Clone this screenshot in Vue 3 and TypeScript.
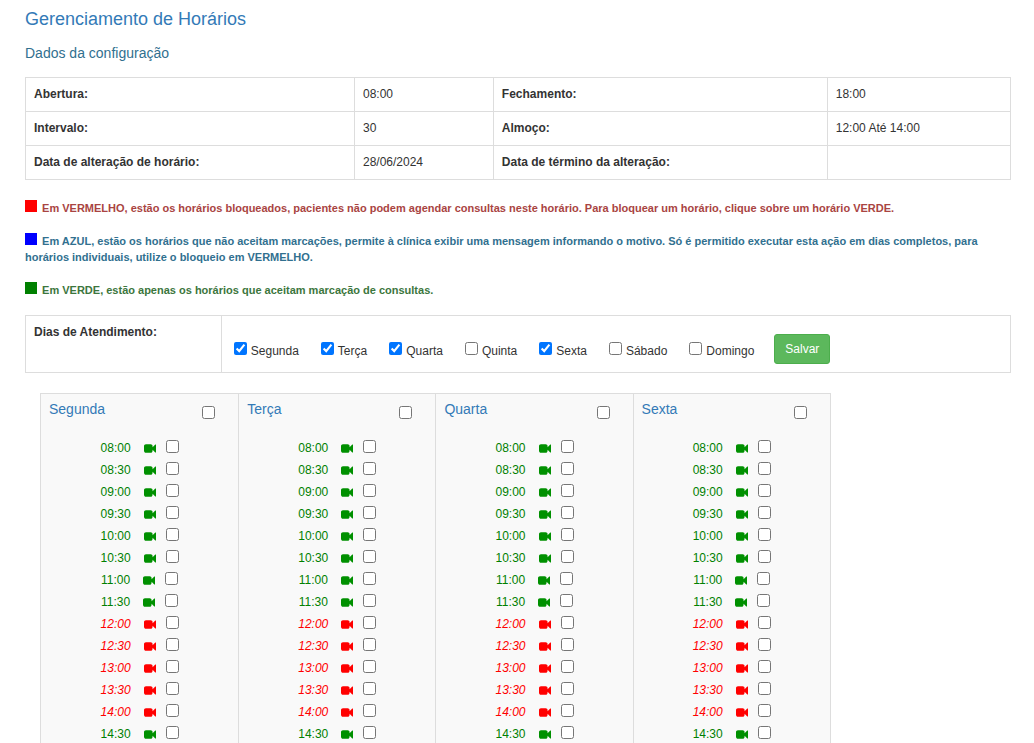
<script setup lang="ts">
import { reactive } from 'vue'

interface Weekday {
  name: string
  open: boolean
}

interface Slot {
  time: string
  blocked: boolean
}

const weekdays = reactive<Weekday[]>([
  { name: 'Segunda', open: true },
  { name: 'Terça', open: true },
  { name: 'Quarta', open: true },
  { name: 'Quinta', open: false },
  { name: 'Sexta', open: true },
  { name: 'Sábado', open: false },
  { name: 'Domingo', open: false },
])

const columns: string[] = ['Segunda', 'Terça', 'Quarta', 'Sexta']

const times: string[] = [
  '08:00', '08:30', '09:00', '09:30', '10:00', '10:30', '11:00',
  '11:30', '12:00', '12:30', '13:00', '13:30', '14:00', '14:30',
]
const slots: Slot[] = times.map((time) => ({
  time,
  blocked: time >= '12:00' && time <= '14:00',
}))
</script>

<template>
  <main class="page">
    <h1 class="title">Gerenciamento de Horários</h1>
    <h2 class="subtitle">Dados da configuração</h2>

    <table class="config">
      <colgroup>
        <col class="c1" /><col class="c2" /><col class="c3" /><col class="c4" />
      </colgroup>
      <tbody>
        <tr>
          <th scope="row">Abertura:</th>
          <td>08:00</td>
          <th scope="row">Fechamento:</th>
          <td>18:00</td>
        </tr>
        <tr>
          <th scope="row">Intervalo:</th>
          <td>30</td>
          <th scope="row">Almoço:</th>
          <td>12:00 Até 14:00</td>
        </tr>
        <tr>
          <th scope="row">Data de alteração de horário:</th>
          <td>28/06/2024</td>
          <th scope="row">Data de término da alteração:</th>
          <td></td>
        </tr>
      </tbody>
    </table>

    <section class="legend">
      <p class="note danger">
        <span class="swatch red"></span>
        Em VERMELHO, estão os horários bloqueados, pacientes não podem agendar consultas neste horário. Para bloquear um horário, clique sobre um horário VERDE.
      </p>
      <p class="note info">
        <span class="swatch blue"></span>
        Em AZUL, estão os horários que não aceitam marcações, permite à clínica exibir uma mensagem informando o motivo. Só é permitido executar esta ação em dias completos, para horários individuais, utilize o bloqueio em VERMELHO.
      </p>
      <p class="note success">
        <span class="swatch green"></span>
        Em VERDE, estão apenas os horários que aceitam marcação de consultas.
      </p>
    </section>

    <form class="days" @submit.prevent>
      <div class="days-label">Dias de Atendimento:</div>
      <div class="days-options">
        <label v-for="day in weekdays" :key="day.name" class="day">
          <input v-model="day.open" type="checkbox" />
          <span>{{ day.name }}</span>
        </label>
        <button class="save" type="submit">Salvar</button>
      </div>
    </form>

    <section class="schedule">
      <div v-for="column in columns" :key="column" class="column">
        <label class="column-head">
          <span>{{ column }}</span>
          <input type="checkbox" />
        </label>
        <label
          v-for="slot in slots"
          :key="slot.time"
          class="slot"
          :class="{ blocked: slot.blocked }"
        >
          <span class="time">{{ slot.time }}</span>
          <svg class="camera" viewBox="0 256 1792 1280" aria-hidden="true">
            <path
              d="M1792 352v1088q0 42-39 59-13 5-25 5-27 0-45-19l-403-403v166q0 119-84.5 203.5t-203.5 84.5h-704q-119 0-203.5-84.5t-84.5-203.5v-704q0-119 84.5-203.5t203.5-84.5h704q119 0 203.5 84.5t84.5 203.5v165l403-402q18-19 45-19 12 0 25 5 39 17 39 59z"
            />
          </svg>
          <input type="checkbox" />
        </label>
      </div>
    </section>
  </main>
</template>

<style>
body {
  margin: 0;
  background: #fff;
}
</style>

<style scoped>
.page {
  box-sizing: border-box;
  height: 100vh;
  overflow: hidden;
  padding: 9px 23px 0 25px;
  font-family: "Liberation Sans", Arial, sans-serif;
  font-size: 12px;
  line-height: 17px;
  color: #333;
}

input[type='checkbox'] {
  width: 13px;
  height: 13px;
  margin: 0;
  flex: none;
}

.title {
  margin: 0;
  font-size: 18px;
  line-height: 20px;
  font-weight: 400;
  color: #337ab7;
}

.subtitle {
  margin: 16px 0;
  font-size: 14px;
  line-height: 16px;
  font-weight: 400;
  color: #31708f;
}

.config {
  width: 100%;
  table-layout: fixed;
  border-collapse: collapse;
}

.c1 { width: 33.4%; }
.c2 { width: 14.1%; }
.c3 { width: 33.9%; }

.config th,
.config td {
  height: 17px;
  padding: 8px;
  border: 1px solid #ddd;
  text-align: left;
  vertical-align: top;
}

.legend {
  margin-top: 20px;
  font-size: 11px;
  line-height: 16px;
  font-weight: 700;
}

.note {
  margin: 0 0 17px;
}

.danger { color: #a94442; }
.info { color: #31708f; }
.success { color: #3c763d; }

.swatch {
  display: inline-block;
  width: 12px;
  height: 12px;
  margin-right: 2px;
}

.red { background: #f00; }
.blue { background: #00f; }
.green { background: #008000; }

.days {
  display: flex;
  border: 1px solid #ddd;
}

.days-label {
  box-sizing: border-box;
  width: 19.9%;
  flex: none;
  padding: 8px;
  border-right: 1px solid #ddd;
  font-weight: 700;
}

.days-options {
  display: flex;
  align-items: center;
  gap: 22px;
  padding: 18px 12px 8px;
}

.day {
  display: flex;
  align-items: center;
  gap: 4px;
}

.day input {
  margin-bottom: 2px;
}

.day span {
  padding-top: 4px;
}

.save {
  height: 30px;
  margin-left: -2px;
  padding: 0 10px;
  border: 1px solid #4cae4c;
  border-radius: 3px;
  background: #5cb85c;
  color: #fff;
  font-family: inherit;
  font-size: 12px;
}

.schedule {
  display: grid;
  grid-template-columns: repeat(4, 1fr);
  width: 80%;
  margin: 20px 0 0 15px;
  border: 1px solid #ddd;
  background: #f9f9f9;
}

.column + .column {
  border-left: 1px solid #ddd;
}

.column-head {
  display: flex;
  justify-content: space-between;
  align-items: flex-start;
  height: 34px;
  padding: 8px 23px 0 8px;
  font-size: 14px;
  line-height: 14px;
  color: #337ab7;
}

.column-head input {
  margin-top: 4px;
}

.slot {
  display: flex;
  justify-content: center;
  align-items: center;
  height: 22px;
  color: #008000;
}

.slot.blocked {
  color: #f00;
}

.time {
  padding-top: 2px;
}

.blocked .time {
  font-style: italic;
}

.camera {
  width: 12px;
  height: 9px;
  margin: 2px 10px 0 13px;
  fill: #009000;
}

.blocked .camera {
  fill: #f00;
}

.slot input {
  margin-bottom: 2px;
}
</style>
